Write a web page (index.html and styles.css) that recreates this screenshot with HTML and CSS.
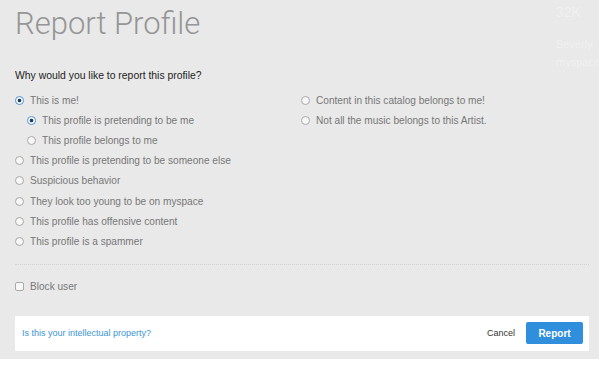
FILE: index.html
```html
<!DOCTYPE html>
<html lang="en">
<head>
    <meta charset="UTF-8">
    <meta name="viewport" content="width=device-width, initial-scale=1.0">
    <title>Report Profile</title>
    <link rel="stylesheet" href="styles.css">
</head>
<body>
    <div class="ghost">
        <div class="ghost-line big">32K</div>
        <div class="ghost-line">Beverly</div>
        <div class="ghost-line">myspace</div>
    </div>
    <div class="modal">
        <h1 class="title">Report Profile</h1>
        <p class="question">Why would you like to report this profile?</p>
        <div class="reasons">
            <div class="column">
                <label class="option"><span class="radio checked"></span>This is me!</label>
                <div class="sub">
                    <label class="option"><span class="radio checked"></span>This profile is pretending to be me</label>
                    <label class="option"><span class="radio"></span>This profile belongs to me</label>
                </div>
                <label class="option"><span class="radio"></span>This profile is pretending to be someone else</label>
                <label class="option"><span class="radio"></span>Suspicious behavior</label>
                <label class="option"><span class="radio"></span>They look too young to be on myspace</label>
                <label class="option"><span class="radio"></span>This profile has offensive content</label>
                <label class="option"><span class="radio"></span>This profile is a spammer</label>
            </div>
            <div class="column">
                <label class="option"><span class="radio"></span>Content in this catalog belongs to me!</label>
                <label class="option"><span class="radio"></span>Not all the music belongs to this Artist.</label>
            </div>
        </div>
        <div class="divider"></div>
        <label class="option block"><span class="checkbox"></span>Block user</label>
        <div class="footer">
            <a class="ip-link" href="#">Is this your intellectual property?</a>
            <div class="actions">
                <span class="cancel">Cancel</span>
                <button class="report">Report</button>
            </div>
        </div>
    </div>
</body>
</html>
```

FILE: styles.css
```css
html, body {
    margin: 0;
    height: 100%;
}

body {
    background: #fff;
    font-family: "Liberation Sans", Arial, sans-serif;
    position: relative;
    overflow: hidden;
}

/* faded page behind the dialog */
.ghost {
    position: absolute;
    top: 3px;
    left: 556px;
    color: rgba(255, 255, 255, 0.35);
    font-size: 11px;
    line-height: 18px;
    white-space: nowrap;
}

.ghost-line.big {
    font-size: 14px;
    margin-bottom: 14px;
}

.modal {
    background: #e9e9e9;
    padding: 0 10px 8px 15px;
}

.title {
    margin: 0;
    padding-top: 5px;
    font-family: Roboto, sans-serif;
    font-weight: 300;
    font-size: 31px;
    line-height: 38px;
    color: #959595;
}

.question {
    margin: 27px 0 9px;
    font-size: 10.4px;
    color: #222;
}

.reasons {
    display: grid;
    grid-template-columns: 286px 1fr;
}

.option {
    display: flex;
    align-items: center;
    height: 20.2px;
    font-size: 10.1px;
    color: #777;
}

.sub {
    padding-left: 12px;
}

.radio {
    width: 7px;
    height: 7px;
    border: 1px solid #a9a9a9;
    border-radius: 50%;
    background: #f7f7f7;
    margin-right: 6px;
    flex-shrink: 0;
}

.radio.checked {
    border-color: #4a93d8;
    background: radial-gradient(circle, #1f3f66 0 1.6px, #fff 2.2px);
}

.checkbox {
    width: 7px;
    height: 7px;
    border: 1px solid #a9a9a9;
    border-radius: 2px;
    background: #f7f7f7;
    margin-right: 6px;
}

.divider {
    margin: 12px 0 12px;
    border-top: 1px dotted #d2d2d2;
}

.footer {
    margin-top: 19px;
    background: #fff;
    display: flex;
    justify-content: space-between;
    align-items: center;
    height: 35px;
    padding: 0 6px 0 7px;
}

.ip-link {
    font-size: 9px;
    color: #3b95d6;
    text-decoration: none;
}

.actions {
    display: flex;
    align-items: center;
    gap: 11px;
}

.cancel {
    font-size: 9px;
    color: #333;
}

.report {
    width: 57px;
    height: 22px;
    border: none;
    border-radius: 2px;
    background: #2f8fdc;
    color: #fff;
    font-family: "Liberation Sans", Arial, sans-serif;
    font-weight: bold;
    font-size: 10px;
}
```
